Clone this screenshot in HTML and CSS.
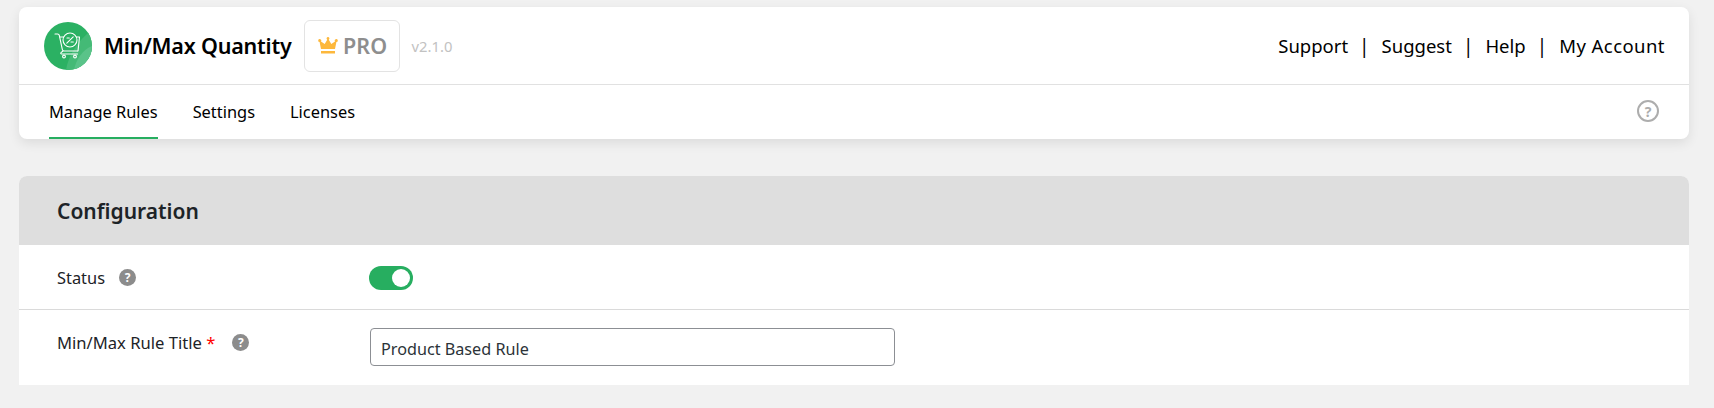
FILE: index.html
```html
<!DOCTYPE html>
<html lang="en">
<head>
<meta charset="utf-8">
<title>Min/Max Quantity</title>
<link rel="stylesheet" href="styles.css">
</head>
<body>
<header class="top-card">
  <div class="brand-bar">
    <div class="brand">
      <svg class="logo" viewBox="0 0 48 48" aria-hidden="true">
        <defs><clipPath id="disc"><circle cx="24" cy="24" r="24"/></clipPath></defs>
        <circle cx="24" cy="24" r="24" fill="#2bb163"/>
        <g clip-path="url(#disc)">
          <path d="M48 8C34 18 24 34 22 48H48Z" fill="#44ba76"/>
          <path d="M48 24C38 28 32 38 30 48H48Z" fill="#5ac389"/>
        </g>
        <g fill="none" stroke="#fff" stroke-width="1.1" stroke-linecap="round" stroke-linejoin="round">
          <path d="M11 12h2.500c1 0 1.600.5 1.800 1.400l3 14c.2 1 .8 1.600 1.800 1.600h13.400"/>
          <path d="M19 29l-2 1.700c-.5.500-.2 1.300.5 1.300h16"/>
          <path d="M16 15h3.500M32.500 15h3l-1.500 14"/>
          <circle cx="26" cy="18" r="7"/>
          <path d="M22.800 21.200l6.400-6.400M23 16h2.300M27 20h2.300"/>
          <circle cx="20" cy="34.500" r="1.400"/>
          <circle cx="31" cy="34.500" r="1.400"/>
        </g>
      </svg>
      <span class="brand-name">Min/Max Quantity</span>
      <span class="pro-badge">
        <svg class="crown" viewBox="0 0 20 17" aria-hidden="true">
          <path d="M10 0a1.500 1.500 0 0 1 .8 2.700l2.500 4.300 3.700-2.600a1.500 1.500 0 1 1 1.400.7L17 12H3L1.600 5.100A1.500 1.500 0 1 1 3 4.400L6.700 7l2.500-4.300A1.500 1.500 0 0 1 10 0Z" fill="#fdb83c"/>
          <rect x="3" y="14" width="14" height="2.500" fill="#fdb83c"/>
        </svg>
        <span>PRO</span>
      </span>
      <span class="version">v2.1.0</span>
    </div>
    <nav class="util-links">
      <a>Support</a><span class="sep">|</span><a>Suggest</a><span class="sep">|</span><a>Help</a><span class="sep">|</span><a class="account">My Account</a>
    </nav>
  </div>
  <div class="tab-bar">
    <nav class="tabs">
      <a class="tab active">Manage Rules</a>
      <a class="tab">Settings</a>
      <a class="tab">Licenses</a>
    </nav>
    <span class="help-ring">?</span>
  </div>
</header>
<section class="panel">
  <h2 class="panel-title">Configuration</h2>
  <div class="row row-status">
    <div class="label"><span>Status</span><span class="tip">?</span></div>
    <div class="toggle"><span class="knob"></span></div>
  </div>
  <div class="row row-title">
    <div class="label"><span>Min/Max Rule Title <b class="req">*</b></span><span class="tip">?</span></div>
    <input class="text-input" type="text" value="Product Based Rule">
  </div>
</section>
</body>
</html>
```
FILE: styles.css
```css
* { box-sizing: border-box; }
html, body { margin: 0; height: 100%; overflow: hidden; }
body {
  background: #f1f1f1;
  padding: 7px 25px 0 19px;
  font-family: "Noto Sans", "Open Sans", sans-serif;
  color: #000;
}
.top-card {
  height: 132px;
  background: #fff;
  border-radius: 8px;
  box-shadow: 0 4px 12px rgba(0, 0, 0, .09);
}
.brand-bar {
  height: 78px;
  border-bottom: 1px solid #e1e1e1;
  padding: 0 24px 0 25px;
  display: flex;
  align-items: center;
  justify-content: space-between;
}
.brand { display: flex; align-items: center; }
.logo { width: 48px; height: 48px; }
.brand-name { margin-left: 12px; font-size: 21.5px; font-weight: 600; letter-spacing: -.2px; }
.pro-badge {
  margin-left: 12px;
  width: 96px;
  height: 52px;
  padding-left: 2px;
  border: 1px solid #e3e3e3;
  border-radius: 6px;
  display: flex;
  align-items: center;
  justify-content: center;
  gap: 5px;
  color: #8e8e8e;
  font-size: 21.5px;
  font-weight: 600;
}
.crown { width: 20px; height: 17px; }
.version { margin-left: 12px; font-size: 14.8px; color: #c2c2c2; }
.util-links {
  display: flex;
  align-items: center;
  font-size: 18.5px;
}
.account { letter-spacing: .45px; }
.sep { margin: 0 12px 0 11px; font-size: 19px; }
.tab-bar {
  height: 54px;
  padding: 0 30px;
  display: flex;
  align-items: center;
  justify-content: space-between;
}
.tabs { display: flex; gap: 35px; height: 100%; }
.tab {
  display: flex;
  align-items: center;
  font-size: 16.4px;
  border-bottom: 2px solid transparent;
}
.tab.active { border-bottom-color: #27ae60; }
.help-ring {
  width: 22px;
  height: 22px;
  margin-bottom: 2px;
  border: 2px solid #adadad;
  border-radius: 50%;
  color: #adadad;
  font-size: 14px;
  font-weight: 700;
  display: flex;
  align-items: center;
  justify-content: center;
}
.panel {
  margin-top: 37px;
  background: #fff;
  border-radius: 8px 8px 0 0;
}
.panel-title {
  margin: 0;
  height: 69px;
  padding: 0 38px;
  background: #dedede;
  border-radius: 8px 8px 0 0;
  display: flex;
  align-items: center;
  font-size: 21px;
  font-weight: 600;
  color: #1d2327;
}
.row {
  padding-left: 38px;
  display: grid;
  grid-template-columns: 313px 1fr;
}
.row-status {
  height: 65px;
  align-items: center;
  border-bottom: 1px solid #dadada;
}
.row-title { height: 75px; padding-top: 18px; }
.row-title .label { margin-top: 2px; }
.label {
  display: flex;
  align-items: center;
  gap: 15px;
  height: 24px;
  font-size: 16.4px;
  color: #1d2327;
}
.row-title .label { gap: 17px; font-size: 16.6px; }
.row-status .label { gap: 14px; }
.req { color: #f00; font-weight: 400; }
.tip {
  width: 17px;
  height: 17px;
  border-radius: 50%;
  background: #8c8c8c;
  color: #fff;
  font-size: 12px;
  font-weight: 700;
  display: flex;
  align-items: center;
  justify-content: center;
}
.toggle {
  width: 44px;
  height: 24px;
  margin: 1px 0 0 -1px;
  border-radius: 12px;
  background: #27ae60;
  display: flex;
  align-items: center;
  justify-content: flex-end;
  padding-right: 3px;
}
.knob { width: 18px; height: 18px; border-radius: 50%; background: #fff; }
.text-input {
  width: 525px;
  height: 38px;
  margin: 0;
  padding: 3px 10px 0;
  border: 1px solid #8c8f94;
  border-radius: 4px;
  background: #fff;
  font: 16.2px "Noto Sans", "Open Sans", sans-serif;
  color: #2c3338;
}
```
